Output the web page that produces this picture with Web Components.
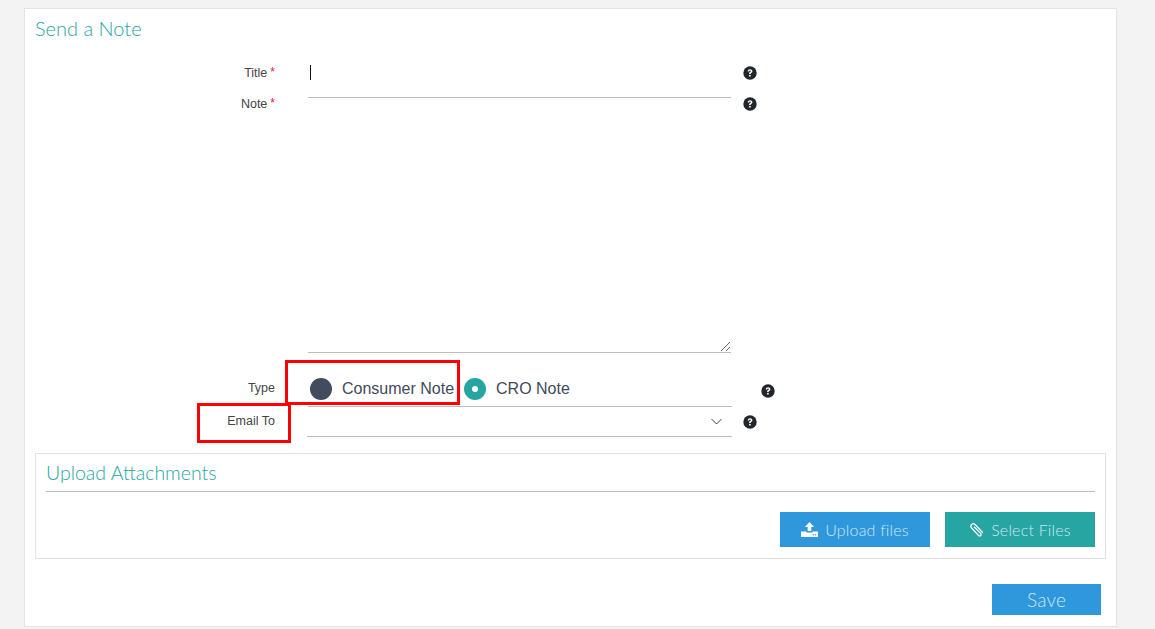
<!DOCTYPE html>
<html><head><meta charset="utf-8"><title>Send a Note</title>
<style>
html,body{margin:0;background:#f3f3f3;height:629px;overflow:hidden}
body{padding:8px 38px 0 24px;font-family:"Liberation Sans",Arial,sans-serif}
</style></head><body>
<note-card></note-card>
<script>
const HELP=`<svg width="14" height="14" viewBox="0 0 14 14" aria-hidden="true"><circle cx="7" cy="7" r="6.7" fill="#22262b"/><path d="M4.7 5.4C4.8 4 5.8 3.2 7.1 3.2c1.3 0 2.3.8 2.3 2 0 1-.6 1.4-1.2 1.8-.5.3-.6.5-.6 1.1H6.1c-.1-1 .2-1.5.9-2 .5-.3.8-.5.8-.9 0-.4-.3-.7-.8-.7-.5 0-.8.3-.9.9z" fill="#fff"/><rect x="6.1" y="8.9" width="1.6" height="1.6" fill="#fff"/></svg>`;
class BaseEl extends HTMLElement{
  render(html){this.attachShadow({mode:"open"}).innerHTML=html}
}
class HelpIcon extends BaseEl{connectedCallback(){if(this.shadowRoot)return;this.render(`<style>:host{display:block;width:14px;height:14px;line-height:0}</style>${HELP}`)}}
class FormRow extends BaseEl{connectedCallback(){if(this.shadowRoot)return;
  const h=this.getAttribute("height")||"33";const w=this.getAttribute("field")||"423";
  const start=this.getAttribute("start")||"283";const gap=this.getAttribute("gap")||"12";const lt=this.getAttribute("labeltop")||"8";const ht=this.getAttribute("helptop")||"9";
  const req=this.hasAttribute("required")?`<span class="req">*</span>`:"";
  this.render(`<style>
  :host{display:flex;align-items:flex-start;height:${h}px}
  .label{box-sizing:border-box;width:250px;flex:none;text-align:right;font-size:12.5px;line-height:15px;color:#444;padding-top:${lt}px}
  .req{color:#f0143c;font-size:12px;margin-left:3px;position:relative;top:-1px}
  .field{box-sizing:border-box;margin-left:${+start-250}px;width:${w}px;height:100%;border-bottom:1px solid #bdbdbd;flex:none;position:relative}
  .help{margin-left:${gap}px;padding-top:${ht}px}
  </style><div class="label"><slot name="label"></slot>${req}</div><div class="field"><slot></slot></div><div class="help"><help-icon></help-icon></div>`)}}
class RadioOpt extends BaseEl{connectedCallback(){if(this.shadowRoot)return;
  const on=this.hasAttribute("checked");
  this.render(`<style>
  :host{display:inline-flex;align-items:center;gap:10px;font-size:16px;color:#3f4a5c;line-height:22px}
  .dot{width:22px;height:22px;border-radius:50%;background:${on?"#26a5a3":"#434c5e"};display:flex;align-items:center;justify-content:center;flex:none}
  .dot i{width:6px;height:6px;border-radius:50%;background:#fff;display:${on?"block":"none"}}
  </style><span class="dot"><i></i></span><slot></slot>`)}}
class AppButton extends BaseEl{connectedCallback(){if(this.shadowRoot)return;
  const c=this.getAttribute("color")||"#2f98dc";
  const w=this.getAttribute("width")||"150";const h=this.getAttribute("height")||"35";const fs=this.getAttribute("size")||"16";
  this.render(`<style>
  :host{display:flex;box-sizing:border-box;width:${w}px;height:${h}px;background:${c};color:#cfe7f5;align-items:center;justify-content:center;gap:7px;font:300 ${fs}px/1 Lato,sans-serif;letter-spacing:.2px}
  svg{display:block;flex:none}
  </style><slot name="icon"></slot><slot></slot>`)}}
class UploadBox extends BaseEl{connectedCallback(){if(this.shadowRoot)return;
  this.render(`<style>
  :host{display:block;box-sizing:border-box;height:106px;border:1px solid #e3e3e3;padding:0 10px;margin:16px 10px 0}
  h3{margin:0;height:38px;box-sizing:border-box;border-bottom:1px solid #bdbdbd;font:300 19.5px/38px Lato,sans-serif;color:#26a5a3}
  .btns{display:flex;justify-content:flex-end;gap:15px;padding-top:20px}
  </style><h3>Upload Attachments</h3><div class="btns"><slot></slot></div>`)}}
class NoteCard extends BaseEl{connectedCallback(){if(this.shadowRoot)return;
  this.render(`<style>
  :host{display:block;box-sizing:border-box;width:1093px;height:619px;background:#fff;border:1px solid #e4e4e4;position:relative}
  h2{margin:0;padding:0 10px;height:46px;font:300 20px/38px Lato,sans-serif;color:#26a5a3}
  .caret{position:absolute;left:0;top:10px;width:1px;height:15px;background:#111;margin-left:2px}
  .grip{position:absolute;right:0;bottom:0;display:block}
  .radios{display:flex;align-items:center;gap:10px;padding:7px 0 0 2px}
  .chev{position:absolute;right:10px;top:11px;display:block}
  .save{display:flex;justify-content:flex-end;padding:25px 15px 0 0}
  .mark{position:absolute;box-sizing:border-box;border:3px solid #f00;pointer-events:none}
  .tag{font-size:12.5px}
  </style>
  <h2>Send a Note</h2>
  <form-row required height="43" labeltop="11" helptop="11"><span slot="label">Title</span><span class="caret"></span></form-row>
  <div style="height:0"></div>
  <form-row required height="261" labeltop="5" helptop="5" style="margin-top:-6px"><span slot="label">Note</span>
    <svg class="grip" width="11" height="11" viewBox="0 0 11 11"><path d="M1 10 10 1M6 10l4-4" stroke="#666" fill="none"/></svg></form-row>
  <form-row height="54" labeltop="28" helptop="31" gap="29" field="424" start="283" style="margin-top:0">
    <span slot="label">Type</span>
    <div class="radios" style="padding-top:25px"><radio-opt>Consumer Note</radio-opt><radio-opt checked>CRO Note</radio-opt></div></form-row>
  <form-row height="30" labeltop="7" helptop="8" gap="11" field="425" start="282"><span slot="label">Email To</span>
    <svg class="chev" width="11" height="7" viewBox="0 0 11 7"><path d="M.5 1 5.5 6l5-5" stroke="#444" fill="none"/></svg></form-row>
  <upload-box>
    <app-button><svg slot="icon" width="17" height="15" viewBox="0 0 17 15"><path fill="#fff" d="M8.5 0 13 5h-2.700v4H6.700V5H4zM0 9.500h5.500v1h6v-1H17V15H0z"/><circle cx="14.500" cy="12.800" r=".7" fill="#2f98dc"/><circle cx="12.300" cy="12.800" r=".7" fill="#2f98dc"/></svg>Upload files</app-button>
    <app-button color="#26a5a3"><svg slot="icon" width="15" height="15" viewBox="0 0 15 15"><path fill="none" stroke="#fff" stroke-width="1.300" d="M13.800 10.800 6 2.400a2.500 2.500 0 0 0-3.700 3.300l7.300 7.900a1.500 1.500 0 0 0 2.200-2L5 4.800"/></svg>Select Files</app-button>
  </upload-box>
  <div class="save"><app-button width="109" height="31" size="19" color="#2f98dc">Save</app-button></div>
  <div class="mark" style="left:260px;top:351px;width:175px;height:45px"></div>
  <div class="mark" style="left:172px;top:394px;width:94px;height:40px"></div>`)}}
customElements.define("help-icon",HelpIcon);
customElements.define("form-row",FormRow);
customElements.define("radio-opt",RadioOpt);
customElements.define("app-button",AppButton);
customElements.define("upload-box",UploadBox);
customElements.define("note-card",NoteCard);
</script>
</body></html>
